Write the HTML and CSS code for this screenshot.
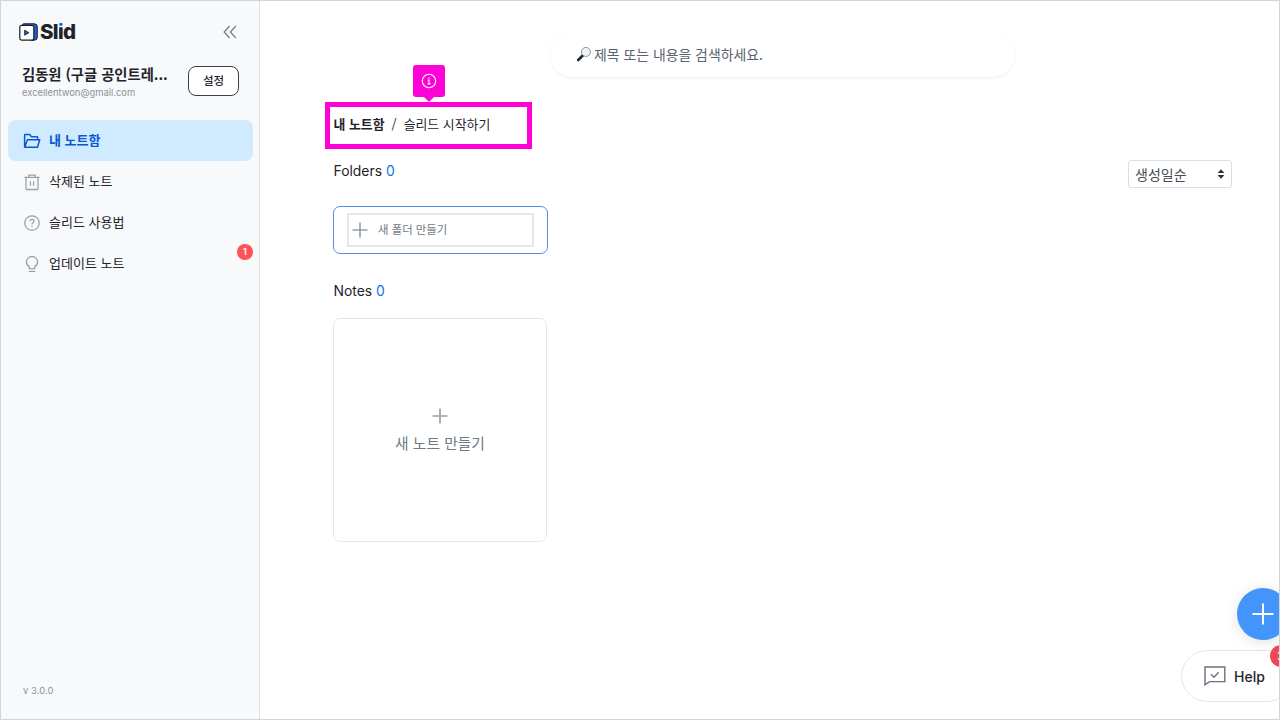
FILE: index.html
```html
<!DOCTYPE html>
<html lang="ko">
<head>
  <meta charset="utf-8">
  <title>Slid</title>
  <link rel="stylesheet" href="styles.css">
</head>
<body>
  <div class="app">
    <aside class="sidebar">
      <div class="sidebar-top">
        <div class="logo">
          <svg width="19" height="18" viewBox="0 0 19 18">
            <path d="M3 2.5C3.3 1.2 4 .8 5 .8h10.3a3 3 0 0 1 3 3v10.4a3 3 0 0 1-3 3H12z" fill="#1763d6" stroke="#1c1f24" stroke-width="1"/>
            <rect x=".8" y="2.3" width="14" height="14.9" rx="2" fill="#fff" stroke="#1c1f24" stroke-width="1.2"/>
            <path d="M5.7 7.2v5l4.2-2.5z" fill="#1763d6" stroke="#1c1f24" stroke-width=".9" stroke-linejoin="round"/>
          </svg>
          <div class="logo-text">Sl<span class="logo-i">i</span>d</div>
        </div>
        <svg class="collapse" width="14" height="14" viewBox="0 0 14 14" fill="none" stroke="#7a838c" stroke-width="1.4">
          <path d="M6.6 1 1.2 7l5.4 6M12.8 1 7.4 7l5.4 6"/>
        </svg>
      </div>

      <div class="profile">
        <div class="profile-info">
          <div class="profile-name">김동원 (구글 공인트레...</div>
          <div class="profile-email">excellentwon@gmail.com</div>
        </div>
        <button class="settings">설정</button>
      </div>

      <nav class="menu">
        <div class="menu-item active">
          <svg width="18" height="18" viewBox="0 0 18 18" fill="none" stroke="#0b57d0" stroke-width="1.5" stroke-linejoin="round">
            <path d="M1.6 15V3.3a.7.7 0 0 1 .7-.7h4.4l1.9 2.2h5.3a.7.7 0 0 1 .7.7v2.2M1.7 15.3l2.7-7.5h12.3l-2.2 7.5z"/>
          </svg>
          <span>내 노트함</span>
        </div>
        <div class="menu-item">
          <svg width="18" height="18" viewBox="0 0 18 18" fill="none" stroke="#98a1aa" stroke-width="1.3">
            <path d="M1.4 4.3h15.2M5.8 4.1V2.2h6.4v1.9M3 4.5v11.1c0 .6.3.9.9.9h10.2c.6 0 .9-.3.9-.9V4.5M7.4 8.2v4.6M10.6 8.2v4.6"/>
          </svg>
          <span>삭제된 노트</span>
        </div>
        <div class="menu-item">
          <svg width="18" height="18" viewBox="0 0 18 18" fill="none" stroke="#98a1aa" stroke-width="1.3">
            <circle cx="9" cy="9" r="7.2"/>
            <path d="M6.9 7.2c0-1.2.9-1.9 2.1-1.9s2.1.7 2.1 1.8c0 1.4-2.1 1.5-2.1 3.2M9 11.6v1.4"/>
          </svg>
          <span>슬리드 사용법</span>
        </div>
        <div class="menu-item">
          <svg width="18" height="18" viewBox="0 0 18 18" fill="none" stroke="#98a1aa" stroke-width="1.3">
            <path d="M6.4 13.6v-2C4.6 10.7 3.4 9 3.4 7.1a5.6 5.6 0 0 1 11.2 0c0 1.9-1.2 3.6-3 4.5v2zM5.8 16.4h6.4"/>
          </svg>
          <span>업데이트 노트</span>
          <span class="menu-badge">1</span>
        </div>
      </nav>

      <div class="version">v 3.0.0</div>
    </aside>

    <main class="content">
      <div class="search">
        <svg width="16" height="16" viewBox="0 0 16 16">
          <path d="M2.2 14 7 9.3" stroke="#20242a" stroke-width="2.6" stroke-linecap="round"/>
          <circle cx="10" cy="5.9" r="4.5" fill="#eef4f8" stroke="#8c959d" stroke-width="1"/>
        </svg>
        <span>제목 또는 내용을 검색하세요.</span>
      </div>

      <div class="breadcrumb">
        <b>내 노트함</b>
        <span class="slash">/</span>
        <span>슬리드 시작하기</span>
        <div class="tip">
          <svg width="16" height="16" viewBox="0 0 16 16" fill="none" stroke="#fff" stroke-width="1.1">
            <circle cx="8" cy="8" r="6.7"/>
            <path d="M6.7 7.1H8v3.7M6.5 10.9h3M8 4.5v1.2"/>
          </svg>
        </div>
      </div>

      <div class="folders-head">
        <div class="section-title">Folders <span class="count">0</span></div>
        <div class="sort">
          <span>생성일순</span>
          <svg width="8" height="10" viewBox="0 0 8 10" fill="#2b3138"><path d="M4 .2 7.4 4H.6zM4 9.8 7.4 6H.6z"/></svg>
        </div>
      </div>

      <div class="new-folder">
        <div class="new-folder-inner">
          <svg width="16" height="16" viewBox="0 0 16 16" stroke="#929ca6" stroke-width="1.6"><path d="M8 .5v15M.5 8h15"/></svg>
          <span>새 폴더 만들기</span>
        </div>
      </div>

      <div class="section-title notes-title">Notes <span class="count">0</span></div>

      <div class="new-note">
        <svg width="16" height="16" viewBox="0 0 16 16" stroke="#98a1aa" stroke-width="1.6"><path d="M8 .5v15M.5 8h15"/></svg>
        <span>새 노트 만들기</span>
      </div>
    </main>

    <div class="add-button">
      <svg width="22" height="22" viewBox="0 0 22 22" stroke="#fff" stroke-width="2" stroke-linecap="round"><path d="M11 1.2v19.6M1.2 11h19.6"/></svg>
    </div>
    <div class="help">
      <svg width="22" height="20" viewBox="0 0 22 20" fill="none" stroke="#69727d" stroke-width="1.4">
        <path d="M1 1h19.8v14.6H5.5L1 18.8zM7 8.3l3 2.9 4.6-4.9"/>
      </svg>
      <span>Help</span>
      <div class="help-badge">2</div>
    </div>
  </div>
</body>
</html>
```
FILE: styles.css
```css
* {
  box-sizing: border-box;
}
body {
  margin: 0;
  font-family: Inter, "Noto Sans CJK KR", sans-serif;
  color: #1f242a;
}
svg {
  display: block;
  flex-shrink: 0;
}
.app {
  position: relative;
  display: flex;
  width: 1280px;
  height: 720px;
  border: 1px solid #d3d4d6;
  background: #fff;
  overflow: hidden;
}

/* sidebar */
.sidebar {
  display: flex;
  flex-direction: column;
  width: 259px;
  padding: 20px 6px 0 7px;
  background: #f8f9fb;
  border-right: 1px solid #e1e3e6;
}
.sidebar-top {
  display: flex;
  align-items: center;
  justify-content: space-between;
  height: 22px;
  padding: 0 16px 0 11px;
}
.logo {
  display: flex;
  align-items: center;
  gap: 2px;
}
.logo-text {
  font-size: 20.5px;
  font-weight: 800;
  letter-spacing: -0.7px;
  line-height: 22px;
}
/* blue dot of the i */
.logo-i {
  display: inline-block;
  background: linear-gradient(#1763d6 7px, #1f242a 7px);
  -webkit-background-clip: text;
  background-clip: text;
  color: transparent;
}
.profile {
  display: flex;
  justify-content: space-between;
  margin-top: 21px;
  padding: 0 14px;
}
.profile-info {
  white-space: nowrap;
}
.profile-name {
  font-family: "Noto Sans CJK KR", sans-serif;
  font-size: 14.3px;
  font-weight: 700;
  line-height: 20px;
}
.profile-email {
  margin-top: 2px;
  font-size: 9.4px;
  line-height: 14px;
  color: #8c9299;
}
.settings {
  width: 51px;
  height: 30px;
  margin-top: 2px;
  padding: 0 0 2px;
  border: 1px solid #3a3f45;
  border-radius: 8px;
  background: #fff;
  color: #1f242a;
  font: 500 11.5px "Noto Sans CJK KR", sans-serif;
}
.menu {
  margin-top: 20px;
  font-family: "Noto Sans CJK KR", sans-serif;
  font-size: 13px;
}
.menu-item {
  position: relative;
  display: flex;
  align-items: center;
  gap: 8px;
  height: 41px;
  padding-left: 15px;
  border-radius: 8px;
}
.menu-item > span:first-of-type {
  padding-bottom: 2px;
}
.active {
  background: #d0eaff;
  color: #0b57d0;
  font-weight: 700;
}
.menu-badge {
  position: absolute;
  top: 1px;
  right: 0;
  width: 16px;
  height: 16px;
  border-radius: 50%;
  background: #ff5258;
  color: #fff;
  font: 600 9px/16px Inter, sans-serif;
  text-align: center;
}
.version {
  margin-top: auto;
  padding: 0 0 22px 15px;
  font-size: 9.5px;
  line-height: 13px;
  color: #8c9299;
}

/* notes area */
.content {
  display: flex;
  flex-direction: column;
  flex: 1;
  padding: 31px 47px 0 73px;
}
.search {
  display: flex;
  align-items: center;
  gap: 2px;
  width: 465px;
  height: 45px;
  margin-left: 217px;
  padding: 0 0 2px 26px;
  border-radius: 23px;
  box-shadow: 0 1px 3px rgba(0, 0, 0, 0.07);
  font: 13.9px "Noto Sans CJK KR", sans-serif;
  color: #59636d;
}
.breadcrumb {
  position: relative;
  display: flex;
  align-items: center;
  width: 207px;
  height: 47px;
  margin: 25px 0 0 -8px;
  padding: 0 0 5px 3.5px;
  border: 5px solid #ff00d6;
  font: 12.9px "Noto Sans CJK KR", sans-serif;
}
.slash {
  margin: 0 7px;
}
.tip {
  position: absolute;
  left: 83px;
  top: -42px;
  display: flex;
  align-items: center;
  justify-content: center;
  width: 32px;
  height: 32px;
  border-radius: 3px;
  background: #ff00d6;
}
.tip::after {
  content: "";
  position: absolute;
  top: 32px;
  left: 11px;
  border: 5px solid transparent;
  border-top-color: #ff00d6;
}
.folders-head {
  display: flex;
  justify-content: space-between;
  margin-top: 11px;
}
.section-title {
  padding-left: 0.5px;
  font-size: 13.9px;
  line-height: 22px;
}
.count {
  color: #0878e8;
}
.sort {
  display: flex;
  align-items: center;
  justify-content: space-between;
  width: 104px;
  height: 28px;
  padding: 0 6px;
  border: 1px solid #d9dee3;
  border-radius: 3px;
  font: 14px "Noto Sans CJK KR", sans-serif;
  color: #454c54;
}
.new-folder {
  width: 215px;
  height: 48px;
  margin-top: 18px;
  padding: 6px 13px;
  border: 1px solid #508fea;
  border-radius: 7px;
}
.new-folder-inner {
  display: flex;
  align-items: center;
  gap: 10px;
  height: 34px;
  padding-left: 3px;
  border: 2px solid #e7e7e7;
  font: 11.4px "Noto Sans CJK KR", sans-serif;
  color: #707a84;
}
.new-folder-inner span {
  padding-bottom: 2px;
}
.notes-title {
  margin-top: 26px;
}
.new-note {
  display: flex;
  flex-direction: column;
  align-items: center;
  gap: 7px;
  width: 214px;
  height: 224px;
  margin-top: 16px;
  padding-top: 89px;
  border: 1px solid #e5e6e8;
  border-radius: 7px;
  font: 14.8px/24px "Noto Sans CJK KR", sans-serif;
  color: #707a84;
}

/* floating buttons, cut off by the right edge */
.add-button {
  position: absolute;
  left: 1236px;
  top: 587px;
  display: flex;
  align-items: center;
  justify-content: center;
  width: 52px;
  height: 52px;
  border-radius: 50%;
  background: #4495fb;
  box-shadow: 0 2px 14px rgba(0, 0, 0, 0.12);
}
.help {
  position: absolute;
  left: 1180px;
  top: 649px;
  display: flex;
  align-items: center;
  gap: 8px;
  width: 112px;
  height: 52px;
  padding-left: 22px;
  border: 1px solid #e2e5ea;
  border-radius: 26px;
  background: #fff;
  font-size: 14px;
  font-weight: 500;
}
.help-badge {
  position: absolute;
  left: 88px;
  top: -6px;
  width: 22px;
  height: 22px;
  border-radius: 50%;
  background: #ec4858;
  color: #fff;
  font-size: 12px;
  line-height: 22px;
  text-align: center;
}
```
